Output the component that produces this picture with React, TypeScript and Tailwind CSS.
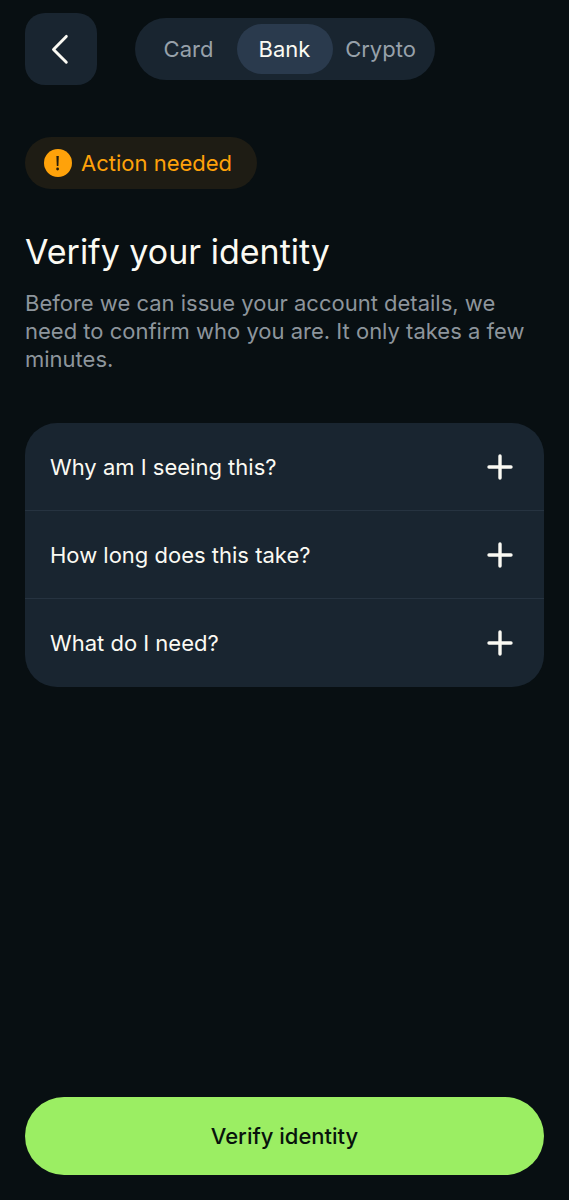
import { useState } from "react";

const tabs = ["Card", "Bank", "Crypto"];

const questions = [
  {
    title: "Why am I seeing this?",
    answer: "We are required to check the identity of every account holder.",
  },
  {
    title: "How long does this take?",
    answer: "Most people finish in a few minutes.",
  },
  {
    title: "What do I need?",
    answer: "A valid photo ID and a device with a camera.",
  },
];

function BackIcon() {
  return (
    <svg viewBox="0 0 24 32" className="h-8 w-6" fill="none" stroke="currentColor" strokeWidth="2.9" strokeLinecap="round" strokeLinejoin="round" aria-hidden="true">
      <path d="M17.3 3.4 4.5 16.4l12.8 12.9" />
    </svg>
  );
}

function AlertIcon() {
  return (
    <svg viewBox="0 0 28 28" className="size-7 shrink-0" aria-hidden="true">
      <circle cx="14" cy="14" r="14" fill="#ffa20a" />
      <path d="M12.4 7h2.4l-.4 10h-1.6z" fill="#241c0c" />
      <circle cx="13.6" cy="20" r="1.4" fill="#241c0c" />
    </svg>
  );
}

function PlusIcon({ open }: { open: boolean }) {
  return (
    <svg viewBox="0 0 26 26" className="size-[26px] shrink-0" fill="none" stroke="currentColor" strokeWidth="3.4" strokeLinecap="round" aria-hidden="true">
      <path d={open ? "M2 13h22" : "M13 2v22M2 13h22"} />
    </svg>
  );
}

export default function App() {
  const [active, setActive] = useState("Bank");
  const [expanded, setExpanded] = useState(-1);

  return (
    <div className="flex min-h-screen flex-col bg-[#080f12] px-[25px] pb-[25px] pt-[13px] font-['Inter',sans-serif] text-[22px] leading-7 text-[#fbfaf3]">
      <header className="grid grid-cols-[1fr_auto_1fr] items-center">
        <button type="button" aria-label="Back" className="flex size-[72px] items-center justify-center rounded-[20px] bg-[#192530]">
          <BackIcon />
        </button>
        <div role="tablist" className="grid grid-cols-[96px_96px_96px] rounded-full bg-[#192530] p-1.5">
          {tabs.map((tab) => (
            <button
              key={tab}
              type="button"
              role="tab"
              aria-selected={tab === active}
              onClick={() => setActive(tab)}
              className={
                tab === active
                  ? "h-[50px] rounded-full bg-[#2a3a4d]"
                  : "h-[50px] rounded-full text-[#97a1aa]"
              }
            >
              {tab}
            </button>
          ))}
        </div>
      </header>

      <main className="flex flex-1 flex-col">
        <div className="mt-[52px] flex items-center gap-[9px] self-start rounded-full bg-[#1e1c14] py-3 pl-[19px] pr-[25px] text-[#ffa20a]">
          <AlertIcon />
          Action needed
        </div>

        <h1 className="mt-[41px] text-[34px] leading-[44px]">Verify your identity</h1>
        <p className="mt-[15px] text-[#8d959c]">
          Before we can issue your account details, we need to confirm who you are. It only takes a few minutes.
        </p>

        <div className="mt-[50px] overflow-hidden rounded-[32px] bg-[#192530]">
          {questions.map((question, index) => (
            <section key={question.title} className="group">
              <button
                type="button"
                aria-expanded={expanded === index}
                onClick={() => setExpanded(expanded === index ? -1 : index)}
                className="flex min-h-[88px] w-full items-center justify-between gap-4 border-b border-[#263340] pl-[25px] pr-[31px] text-left group-last:border-transparent"
              >
                {question.title}
                <PlusIcon open={expanded === index} />
              </button>
              {expanded === index && <p className="px-[25px] py-5 text-[#97a1aa]">{question.answer}</p>}
            </section>
          ))}
        </div>
      </main>

      <button type="button" className="mt-10 h-[78px] rounded-full bg-[#9bee63] font-medium text-[#08130c]">
        Verify identity
      </button>
    </div>
  );
}
